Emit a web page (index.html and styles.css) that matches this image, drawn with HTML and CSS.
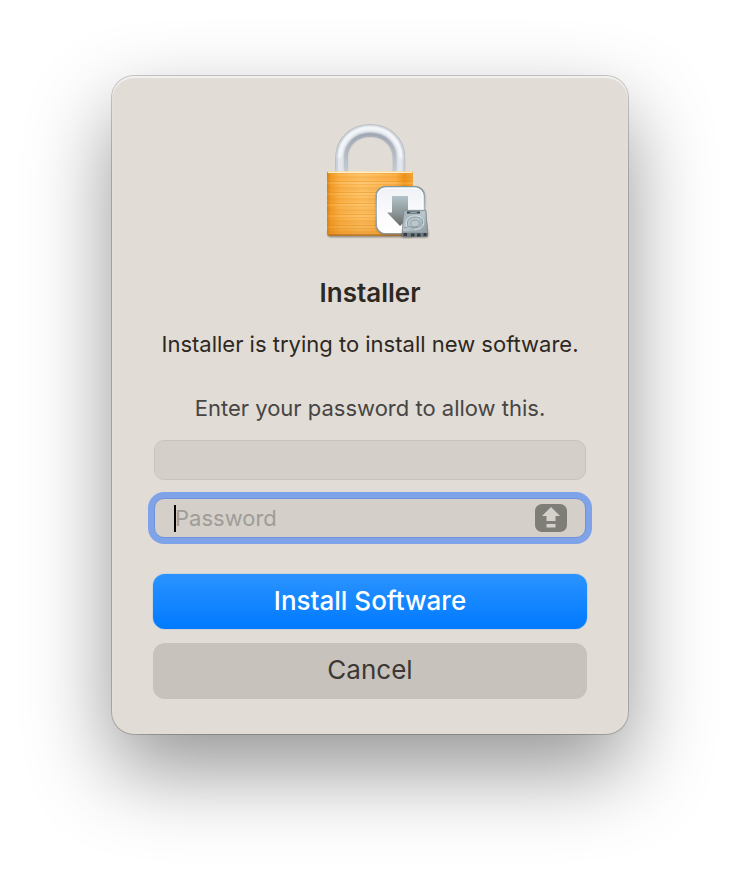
FILE: index.html
```html
<!DOCTYPE html>
<html lang="en">
<head>
    <meta charset="UTF-8">
    <meta name="viewport" content="width=device-width, initial-scale=1.0">
    <title>Installer</title>
    <link rel="stylesheet" href="styles.css">
</head>
<body>

    <form class="dialog" role="dialog" aria-labelledby="title">
        <svg class="lock" viewBox="0 10 120 120" aria-hidden="true">
            <defs>
                <linearGradient id="gold" x1="0" x2="1" y1="0" y2="0">
                    <stop offset="0" stop-color="#cf7c10"/>
                    <stop offset=".04" stop-color="#f09a25"/>
                    <stop offset=".15" stop-color="#fbb34c"/>
                    <stop offset=".4" stop-color="#ffc56c"/>
                    <stop offset=".8" stop-color="#fbb048"/>
                    <stop offset=".9" stop-color="#ee9115"/>
                    <stop offset="1" stop-color="#f3a63a"/>
                </linearGradient>
                <linearGradient id="shade" x1="0" x2="0" y1="0" y2="1">
                    <stop offset="0" stop-color="#e48a10" stop-opacity="0"/>
                    <stop offset=".7" stop-color="#e48a10" stop-opacity=".1"/>
                    <stop offset="1" stop-color="#d97f0c" stop-opacity=".4"/>
                </linearGradient>
                <pattern id="brushed" width="90" height="11" patternUnits="userSpaceOnUse">
                    <path d="M0 1h90M0 5.5h90" stroke="#e68d18" stroke-width=".9" opacity=".5"/>
                    <path d="M0 3h90M0 8.5h90" stroke="#ef9b2c" stroke-width=".8" opacity=".45"/>
                    <path d="M0 7h90" stroke="#ffe0a5" stroke-width=".8" opacity=".4"/>
                </pattern>
                <linearGradient id="steel" x1="0" x2="0" y1="0" y2="1">
                    <stop offset="0" stop-color="#8d95a1"/>
                    <stop offset=".5" stop-color="#a9b0ba"/>
                    <stop offset="1" stop-color="#c3c9d1"/>
                </linearGradient>
                <linearGradient id="tile" x1="0" x2="0" y1="0" y2="1">
                    <stop offset="0" stop-color="#eef1f6"/>
                    <stop offset=".6" stop-color="#fcfcfd"/>
                    <stop offset="1" stop-color="#ffffff"/>
                </linearGradient>
                <linearGradient id="rim" x1="0" x2="0" y1="0" y2="1">
                    <stop offset="0" stop-color="#7d959f"/>
                    <stop offset=".5" stop-color="#abb8be"/>
                    <stop offset="1" stop-color="#8c918f"/>
                </linearGradient>
                <linearGradient id="arrow" x1="0" x2="0" y1="0" y2="1">
                    <stop offset="0" stop-color="#b1c3c9"/>
                    <stop offset=".55" stop-color="#8d9799"/>
                    <stop offset="1" stop-color="#696a69"/>
                </linearGradient>
                <linearGradient id="drive" x1="0" x2="1" y1="0" y2="1">
                    <stop offset="0" stop-color="#9dabb2"/>
                    <stop offset=".5" stop-color="#b9c7cc"/>
                    <stop offset="1" stop-color="#8c999f"/>
                </linearGradient>
                <filter id="soft" x="-20%" y="-20%" width="140%" height="140%">
                    <feGaussianBlur stdDeviation="1"/>
                </filter>
            </defs>

            <!-- shackle -->
            <g fill="none">
                <path d="M31.500 62V48C31.500 32 43.500 20.500 60.300 20.500S89 32 89 48V62" stroke="#a9b0b9" stroke-width="12.400"/>
                <path d="M31.500 62V48C31.500 32 43.500 20.500 60.300 20.500S89 32 89 48V62" stroke="#ccd2da" stroke-width="11.400"/>
                <path d="M31 62V47.500C31 31 43.500 19.500 60.300 19.500S89.500 31 89.500 47.500V62" stroke="#e3e7ed" stroke-width="6"/>
                <path d="M35.500 62V47.500C36 34 46 24.500 60.300 24.500S84.500 34 85 47.500V62" stroke="url(#steel)" stroke-width="3.500" opacity=".85" filter="url(#soft)"/>
                <path d="M29.500 48C30 31 42.500 18 60.300 18S90.500 31 91 48" stroke="#f8fafc" stroke-width="3" filter="url(#soft)"/>
            </g>

            <!-- body -->
            <rect x="18" y="121" width="85" height="6" rx="2" fill="#3c3021" opacity=".6" filter="url(#soft)"/>
            <rect x="17" y="61.500" width="86" height="64" rx="1.500" fill="url(#gold)"/>
            <rect x="17" y="63" width="86" height="62" fill="url(#brushed)"/>
            <rect x="17" y="61.500" width="86" height="64" rx="1.500" fill="url(#shade)"/>
            <path d="M18 62.300h84" stroke="#fff0ce" stroke-width="1.500"/>
            <path d="M18 125h84" stroke="#a8651a" stroke-width="1"/>

            <!-- download tile -->
            <rect x="66" y="77" width="49" height="48" rx="10" fill="#3c3021" opacity=".4" filter="url(#soft)"/>
            <rect x="66.300" y="76.800" width="48" height="47" rx="9" fill="url(#tile)" stroke="url(#rim)" stroke-width="1.600"/>
            <rect x="67.500" y="78" width="45.500" height="44.600" rx="8" fill="none" stroke="#ffffff" stroke-width="1"/>
            <path d="M82 86h16v16.500h6.500L90 116 77 102.500h5z" fill="url(#arrow)"/>

            <!-- hard drive -->
            <rect x="92" y="120" width="26" height="7.500" rx="2" fill="#222" opacity=".5" filter="url(#soft)"/>
            <path d="M94 100h22l2 21v4.500q0 1.500-1.500 1.500h-23q-1.500 0-1.500-1.500V121z" fill="#707b82"/>
            <path d="M93.800 100.300h21.900l1.800 21.200H92.400z" fill="url(#drive)" stroke="#7b888f" stroke-width=".6"/>
            <path d="M97 101.500h13v2H97z" fill="#39434a"/>
            <path d="M100 102.500h7" stroke="#aebbc1" stroke-width=".8"/>
            <path d="M97 117c-2.500-6 1-11 8-11s9.500 3.500 8.500 8c-.8 4-5 5.500-9 5" fill="none" stroke="#dbe5e8" stroke-width="1"/>
            <path d="M98 116c-2-5 1-9 7-9s8.500 3 7.500 7" fill="none" stroke="#798890" stroke-width=".6"/>
            <ellipse cx="105" cy="113.500" rx="4.200" ry="3.300" fill="#b9c9ce" stroke="#83939b" stroke-width=".7"/>
            <path d="M94 118l5-1.500q5 2.500 9 .5" fill="none" stroke="#77868e" stroke-width=".7"/>
            <path d="M92.500 122h25" stroke="#c5ced2" stroke-width=".8"/>
            <path d="M93.500 123h3.500v3h-3.500zM101 123.500h3.500v3h-3.500zM107 123.500h3.500v3h-3.500zM113.500 123h3v3h-3z" fill="#343c41"/>
        </svg>

        <h1 class="title" id="title">Installer</h1>
        <p class="message">Installer is trying to install new software.</p>
        <p class="prompt">Enter your password to allow this.</p>

        <input class="field" type="text" aria-label="User name">
        <div class="field password">
            <span class="caret"></span>
            <input class="password-input" type="password" placeholder="Password" aria-label="Password">
            <svg class="caps-lock" viewBox="0 0 32 28" role="img" aria-label="Caps Lock is on">
                <rect width="32" height="28" rx="7" fill="#7f7d78"/>
                <path d="M16 3l9 9h-4.500v5h-9v-5H7zM11.500 20h9v3.500h-9z" fill="#d5d0ca"/>
            </svg>
        </div>

        <div class="actions">
            <button class="button primary" type="button">Install Software</button>
            <button class="button" type="button">Cancel</button>
        </div>
    </form>

</body>
</html>
```
FILE: styles.css
```css
* {
    box-sizing: border-box;
}
body {
    margin: 0;
    padding: 76px 24px 148px;
    background: white;
    color: #2d2822;
    font-family: Inter, "Liberation Sans", sans-serif;
    font-size: 22px;
    line-height: 28px;
}
.dialog {
    display: flex;
    flex-direction: column;
    max-width: 516px;
    margin: 0 auto;
    padding: 44px 41px 35px;
    background: #e1dcd6;
    border-radius: 22px;
    box-shadow:
        inset 0 2px 1px rgba(255, 255, 255, 0.6),
        0 0 0 1px rgba(0, 0, 0, 0.2),
        0 36px 84px rgba(0, 0, 0, 0.42);
    text-align: center;
}
.lock {
    width: 120px;
    height: 120px;
    align-self: center;
}
.title {
    margin: 37px 0 21px;
    font-size: 26px;
    font-weight: 600;
    line-height: 32px;
}
.message {
    margin: 0 0 36px;
}
.prompt {
    margin: 0 0 18px;
    color: #474543;
}
.field {
    height: 40px;
    margin: 0 1px;
    padding: 0 20px;
    background: #d4cfc9;
    border: 1px solid #c8c3bc;
    border-radius: 10px;
    font: inherit;
}
.password {
    position: relative;
    display: flex;
    align-items: center;
    margin-top: 18px;
    padding-right: 18px;
    border-color: #7192da;
    box-shadow: 0 0 0 6px #7fa3e8;
}
.password-input {
    flex: 1;
    min-width: 0;
    padding: 0;
    border: none;
    outline: none;
    background: none;
    color: #2d2822;
    font: inherit;
}
.password-input::placeholder {
    color: #a09c97;
}
.caret {
    position: absolute;
    left: 19px;
    width: 2px;
    height: 27px;
    background: black;
}
.caps-lock {
    width: 32px;
    height: 28px;
}
.actions {
    display: grid;
    gap: 14px;
    margin-top: 36px;
}
.button {
    height: 56px;
    padding: 0 0 2px;
    border: none;
    border-radius: 12px;
    background: #c7c2bb;
    color: #3b3835;
    font: inherit;
    font-size: 26px;
}
.primary {
    height: 55px;
    background: linear-gradient(#2b93ff, #007aff);
    box-shadow: 0 0 1px #007aff;
    color: white;
    font-weight: 500;
}
```
